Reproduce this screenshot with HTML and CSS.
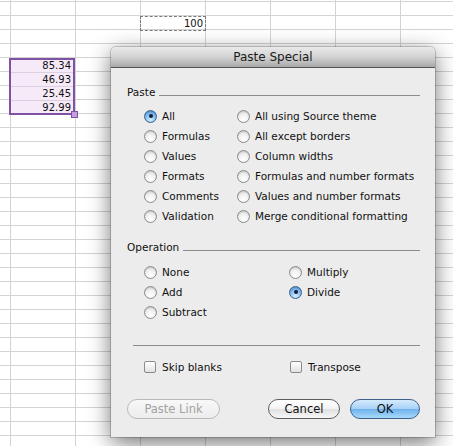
FILE: index.html
```html
<!DOCTYPE html>
<html>
<head>
<meta charset="utf-8">
<link rel="stylesheet" href="styles.css">
</head>
<body>
<div class="sheet">
  <div class="cell copied" style="grid-column:4;grid-row:3">100</div>
  <div class="selection">
    <div class="cell sel">85.34</div>
    <div class="cell sel">46.93</div>
    <div class="cell sel">25.45</div>
    <div class="cell sel">92.99</div>
    <span class="handle"></span>
  </div>

  <div class="dialog">
    <div class="titlebar">Paste Special</div>
    <div class="content">
      <div class="group-head"><span>Paste</span><span class="rule"></span></div>
      <div class="options paste-opts">
        <label class="opt"><span class="radio on"></span>All</label>
        <label class="opt"><span class="radio"></span>All using Source theme</label>
        <label class="opt"><span class="radio"></span>Formulas</label>
        <label class="opt"><span class="radio"></span>All except borders</label>
        <label class="opt"><span class="radio"></span>Values</label>
        <label class="opt"><span class="radio"></span>Column widths</label>
        <label class="opt"><span class="radio"></span>Formats</label>
        <label class="opt"><span class="radio"></span>Formulas and number formats</label>
        <label class="opt"><span class="radio"></span>Comments</label>
        <label class="opt"><span class="radio"></span>Values and number formats</label>
        <label class="opt"><span class="radio"></span>Validation</label>
        <label class="opt"><span class="radio"></span>Merge conditional formatting</label>
      </div>

      <div class="group-head op-head"><span>Operation</span><span class="rule"></span></div>
      <div class="options op-opts">
        <label class="opt"><span class="radio"></span>None</label>
        <label class="opt"><span class="radio"></span>Multiply</label>
        <label class="opt"><span class="radio"></span>Add</label>
        <label class="opt"><span class="radio on"></span>Divide</label>
        <label class="opt"><span class="radio"></span>Subtract</label>
      </div>

      <div class="separator"></div>

      <div class="options check-opts">
        <label class="opt"><span class="check"></span>Skip blanks</label>
        <label class="opt"><span class="check"></span>Transpose</label>
      </div>

      <div class="buttons">
        <button class="btn disabled">Paste Link</button>
        <span class="spacer"></span>
        <button class="btn cancel">Cancel</button>
        <button class="btn ok">OK</button>
      </div>
    </div>
  </div>
</div>
</body>
</html>
```
FILE: styles.css
```css
html, body {
  margin: 0;
  padding: 0;
  background: #ffffff;
}

.sheet {
  position: relative;
  width: 453px;
  height: 446px;
  overflow: hidden;
  display: grid;
  grid-template-columns: 10px repeat(7, 65px);
  grid-template-rows: 1px repeat(32, 14px);
  background-color: #ffffff;
  background-image:
    linear-gradient(to right, #d3d3d3 1px, transparent 1px),
    linear-gradient(to bottom, #d3d3d3 1px, transparent 1px);
  background-size: 65px 14px, 65px 14px;
  background-position: 10px 0, 0 1px;
  font-family: "DejaVu Sans", Verdana, sans-serif;
  font-size: 10px;
  color: #111;
}

.cell {
  height: 14px;
  line-height: 14px;
  text-align: right;
  padding-right: 3px;
  box-sizing: border-box;
}

.copied {
  margin-top: 1px;
  border: 1px dashed #7a7a7a;
  width: 66px;
  height: 15px;
  line-height: 13px;
  padding-right: 2px;
}

.selection {
  grid-column: 2;
  grid-row: 6 / span 4;
  position: relative;
  margin-top: 1px;
  width: 66px;
  border: 2px solid #7f52a3;
  margin-left: -1px;
  box-sizing: border-box;
  height: 57px;
  background-color: #f6eaf8;
  background-image: linear-gradient(to bottom, #dcd0e0 1px, transparent 1px);
  background-size: 100% 14px;
  background-position: 0 12px;
}

.sel {
  height: 14px;
  line-height: 12px;
  padding-right: 2px;
}

.handle {
  position: absolute;
  right: -5px;
  bottom: -5px;
  width: 5px;
  height: 5px;
  background: #c79ce0;
  border: 1px solid #7f52a3;
}

/* Dialog */
.dialog {
  position: absolute;
  left: 111px;
  top: 47px;
  width: 324px;
  height: 390px;
  background: #ececec;
  border-radius: 5px 5px 0 0;
  box-shadow: 0 6px 22px rgba(0, 0, 0, 0.55), 0 0 0 1px rgba(0, 0, 0, 0.18);
  font-family: "DejaVu Sans", Verdana, sans-serif;
  font-size: 10.5px;
  color: #111;
  display: flex;
  flex-direction: column;
}

.titlebar {
  height: 20px;
  line-height: 21px;
  text-align: center;
  font-size: 12px;
  color: #1a1a1a;
  background: linear-gradient(to bottom, #eaeaea 0%, #d2d2d2 50%, #a9a9a9 100%);
  border-bottom: 1px solid #545454;
  border-radius: 5px 5px 0 0;
}

.content {
  padding: 17px 15px 0 16px;
  display: flex;
  flex-direction: column;
}

.group-head {
  display: flex;
  align-items: center;
  height: 14px;
  line-height: 14px;
}

.group-head .rule {
  flex: 1;
  height: 0;
  border-top: 1px solid #8c8c8c;
  margin-left: 4px;
  margin-top: 6px;
}

.options {
  display: grid;
  padding-left: 17px;
  grid-auto-rows: 20px;
}

.paste-opts {
  margin-top: 7px;
  grid-template-columns: 93px 1fr;
}

.op-head {
  margin-top: 14px;
}

.op-opts {
  margin-top: 8px;
  grid-template-columns: 145px 1fr;
}

.check-opts {
  margin-top: 11px;
  grid-template-columns: 146px 1fr;
}

.opt {
  display: flex;
  align-items: center;
  white-space: nowrap;
}

.radio {
  position: relative;
  width: 11px;
  height: 11px;
  border-radius: 50%;
  border: 1px solid #8b8b8b;
  background: radial-gradient(circle at 50% 75%, #ffffff 0%, #f4f4f4 40%, #d6d6d6 100%);
  margin-right: 5px;
  flex: none;
  box-shadow: inset 0 1px 1px rgba(0,0,0,0.12);
}

.radio.on {
  border-color: #3e5f8c;
  background: radial-gradient(circle at 50% 80%, #d7ecfd 0%, #8cc3f2 45%, #4f8fd0 100%);
}

.radio.on::after {
  content: "";
  position: absolute;
  left: 3.5px;
  top: 3.5px;
  width: 4px;
  height: 4px;
  border-radius: 50%;
  background: #10203a;
}

.check {
  width: 10px;
  height: 10px;
  border: 1px solid #8b8b8b;
  border-radius: 2px;
  background: linear-gradient(to bottom, #ffffff, #e2e2e2);
  margin-right: 6px;
  flex: none;
}

.separator {
  margin: 23px 0 0 6px;
  border-top: 1px solid #8c8c8c;
}

.buttons {
  display: flex;
  margin-top: 22px;
}

.spacer {
  flex: 1;
}

.btn {
  height: 20px;
  border-radius: 10px;
  font-family: "DejaVu Sans", Verdana, sans-serif;
  font-size: 11.5px;
  padding: 0;
  line-height: 18px;
  color: #111;
  box-sizing: border-box;
}

.disabled {
  width: 93px;
  border: 1px solid #b9b9b9;
  background: linear-gradient(to bottom, #f8f8f8, #ececec);
  color: #a2a2a2;
}

.cancel {
  width: 72px;
  border: 1px solid #5e5e5e;
  background: linear-gradient(to bottom, #ffffff 0%, #f3f3f3 50%, #e0e0e0 51%, #f6f6f6 100%);
}

.ok {
  width: 70px;
  margin-left: 10px;
  border: 1px solid #3f5f8e;
  background: linear-gradient(to bottom, #d5ebfd 0%, #a6d0f7 50%, #6fb0ec 51%, #a9dafd 100%);
}
```
